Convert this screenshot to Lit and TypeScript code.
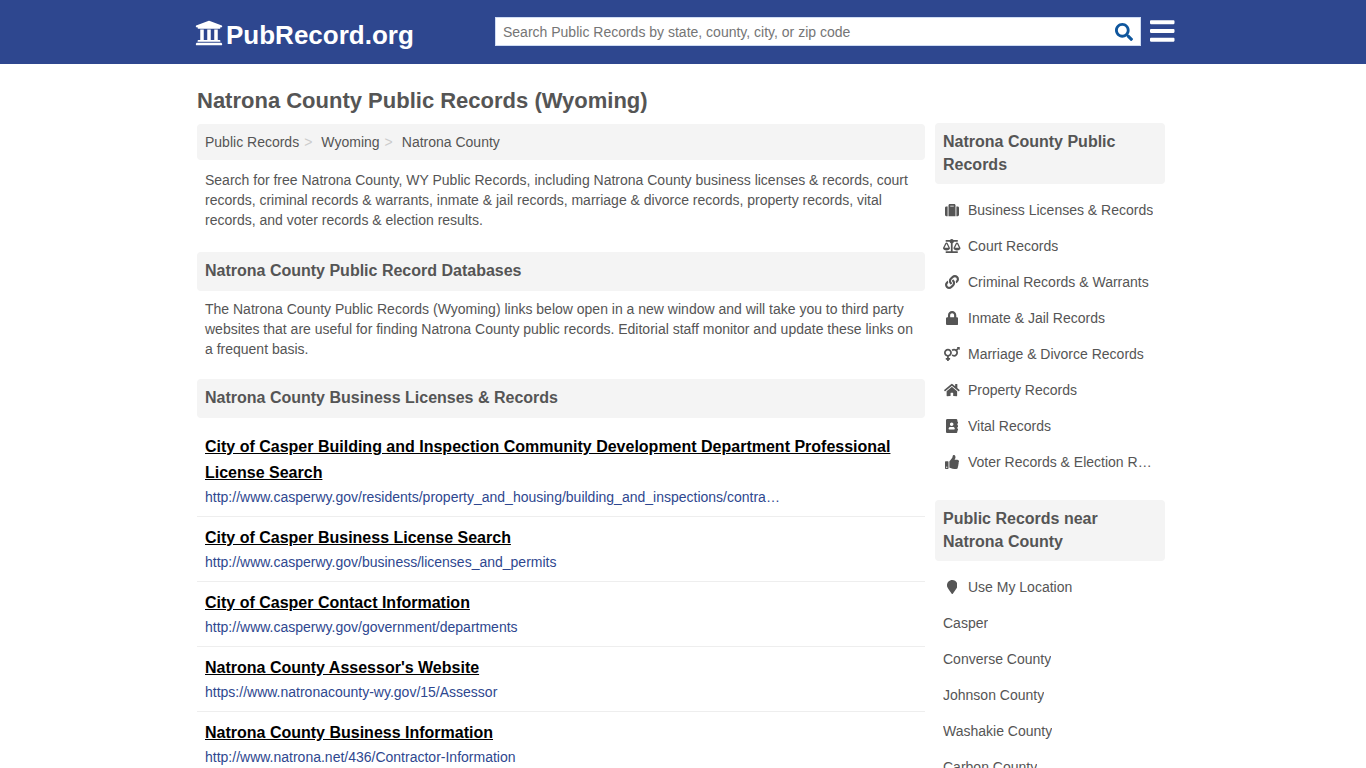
import { LitElement, html, css, svg } from "lit";
import { customElement } from "lit/decorators.js";

interface Icon {
  w: number;
  d: string;
}

const icons: Record<string, Icon> = {
  university: {
    w: 512,
    d: "M496 128v16a8 8 0 0 1-8 8h-24v12c0 6.627-5.373 12-12 12H60c-6.627 0-12-5.373-12-12v-12H24a8 8 0 0 1-8-8v-16a8 8 0 0 1 4.941-7.392l232-88a7.996 7.996 0 0 1 6.118 0l232 88A8 8 0 0 1 496 128zm-24 304H40c-13.255 0-24 10.745-24 24v16a8 8 0 0 0 8 8h464a8 8 0 0 0 8-8v-16c0-13.255-10.745-24-24-24zM96 192v192H60c-6.627 0-12 5.373-12 12v20h416v-20c0-6.627-5.373-12-12-12h-36V192h-64v192h-64V192h-64v192h-64V192H96z",
  },
  search: {
    w: 512,
    d: "M505 442.7L405.3 343c-4.5-4.5-10.6-7-17-7H372c27.6-35.3 44-79.7 44-128C416 93.1 322.9 0 208 0S0 93.1 0 208s93.1 208 208 208c48.3 0 92.7-16.4 128-44v16.3c0 6.4 2.5 12.5 7 17l99.7 99.7c9.4 9.4 24.6 9.4 33.9 0l28.3-28.3c9.4-9.4 9.4-24.6.1-34zM208 336c-70.7 0-128-57.2-128-128 0-70.7 57.2-128 128-128 70.7 0 128 57.2 128 128 0 70.7-57.2 128-128 128z",
  },
  bars: {
    w: 448,
    d: "M16 132h416c8.837 0 16-7.163 16-16V76c0-8.837-7.163-16-16-16H16C7.163 60 0 67.163 0 76v40c0 8.837 7.163 16 16 16zm0 160h416c8.837 0 16-7.163 16-16v-40c0-8.837-7.163-16-16-16H16c-8.837 0-16 7.163-16 16v40c0 8.837 7.163 16 16 16zm0 160h416c8.837 0 16-7.163 16-16v-40c0-8.837-7.163-16-16-16H16c-8.837 0-16 7.163-16 16v40c0 8.837 7.163 16 16 16z",
  },
  suitcase: {
    w: 512,
    d: "M128 480h256V80c0-26.5-21.5-48-48-48H176c-26.5 0-48 21.5-48 48v400zm64-384h128v32H192V96zm320 80v256c0 26.5-21.5 48-48 48h-48V128h48c26.5 0 48 21.5 48 48zM96 480H48c-26.5 0-48-21.5-48-48V176c0-26.5 21.5-48 48-48h48v352z",
  },
  scale: {
    w: 640,
    d: "M256 336h-.02c0-16.18 1.34-8.73-85.05-181.51-17.65-35.29-68.19-35.36-85.87 0C-2.06 328.75.02 320.33.02 336H0c0 44.18 57.31 80 128 80s128-35.82 128-80zM128 176l72 144H56l72-144zm511.98 160c0-16.18 1.34-8.73-85.05-181.51-17.65-35.29-68.19-35.36-85.87 0-87.12 174.26-85.04 165.84-85.04 181.51H384c0 44.18 57.31 80 128 80s128-35.82 128-80h-.02zM440 320l72-144 72 144H440zm88 128H352V153.25c23.51-10.29 41.16-31.48 46.39-57.25H528c8.84 0 16-7.16 16-16V48c0-8.84-7.16-16-16-16H383.64C369.04 12.68 346.09 0 320 0s-49.04 12.68-63.64 32H112c-8.84 0-16 7.16-16 16v32c0 8.84 7.16 16 16 16h129.61c5.23 25.76 22.87 46.96 46.39 57.25V448H112c-8.84 0-16 7.16-16 16v32c0 8.84 7.16 16 16 16h416c8.84 0 16-7.16 16-16v-32c0-8.84-7.16-16-16-16z",
  },
  link: {
    w: 512,
    d: "M326.612 185.391c59.747 59.809 58.927 155.698.36 214.59-.11.12-.24.25-.36.37l-67.2 67.2c-59.27 59.27-155.699 59.262-214.96 0-59.27-59.26-59.27-155.7 0-214.96l37.106-37.106c9.84-9.84 26.786-3.3 27.294 10.606.648 17.722 3.826 35.527 9.69 52.721 1.986 5.822.567 12.262-3.783 16.612l-13.087 13.087c-28.026 28.026-28.905 73.66-1.155 101.96 28.024 28.579 74.086 28.749 102.325.51l67.2-67.19c28.191-28.191 28.073-73.757 0-101.83-3.701-3.694-7.429-6.564-10.341-8.569a16.037 16.037 0 0 1-6.947-12.606c-.396-10.567 3.348-21.456 11.698-29.806l21.054-21.055c5.521-5.521 14.182-6.199 20.584-1.731a152.482 152.482 0 0 1 20.522 17.197zM467.547 44.449c-59.261-59.262-155.69-59.27-214.96 0l-67.2 67.2c-.12.12-.25.25-.36.37-58.566 58.892-59.387 154.781.36 214.59a152.454 152.454 0 0 0 20.521 17.196c6.402 4.468 15.064 3.789 20.584-1.731l21.054-21.055c8.35-8.35 12.094-19.239 11.698-29.806a16.037 16.037 0 0 0-6.947-12.606c-2.912-2.005-6.64-4.875-10.341-8.569-28.073-28.073-28.191-73.639 0-101.83l67.2-67.19c28.239-28.239 74.3-28.069 102.325.51 27.75 28.3 26.872 73.934-1.155 101.96l-13.087 13.087c-4.35 4.35-5.769 10.79-3.783 16.612 5.864 17.194 9.042 34.999 9.69 52.721.509 13.906 17.454 20.446 27.294 10.606l37.106-37.106c59.271-59.259 59.271-155.699.001-214.959z",
  },
  lock: {
    w: 448,
    d: "M400 224h-24v-72C376 68.2 307.8 0 224 0S72 68.2 72 152v72H48c-26.5 0-48 21.5-48 48v192c0 26.5 21.5 48 48 48h352c26.5 0 48-21.5 48-48V272c0-26.5-21.5-48-48-48zm-104 0H152v-72c0-39.7 32.3-72 72-72s72 32.3 72 72v72z",
  },
  venusMars: {
    w: 576,
    d: "M564 0h-79c-10.7 0-16 12.9-8.5 20.5l16.9 16.9-48.7 48.7C422.5 72.1 396.2 64 368 64c-33.7 0-64.6 11.6-89.2 30.9 14 16.7 25 36 32.1 57.1 14.5-14.8 34.7-24 57.1-24 44.1 0 80 35.9 80 80s-35.9 80-80 80c-22.3 0-42.6-9.2-57.1-24-7.1 21.1-18 40.4-32.1 57.1 24.5 19.4 55.5 30.9 89.2 30.9 79.5 0 144-64.5 144-144 0-28.2-8.1-54.5-22.1-76.7l48.7-48.7 16.9 16.9c2.4 2.4 5.4 3.5 8.4 3.5 6.2 0 12.1-4.8 12.1-12V12c0-6.6-5.4-12-12-12zM144 64C64.5 64 0 128.5 0 208c0 68.5 47.9 125.9 112 140.4V400H76c-6.6 0-12 5.4-12 12v40c0 6.6 5.4 12 12 12h36v36c0 6.6 5.4 12 12 12h40c6.6 0 12-5.4 12-12v-36h36c6.6 0 12-5.4 12-12v-40c0-6.6-5.4-12-12-12h-36v-51.6c64.1-14.6 112-71.9 112-140.4 0-79.5-64.5-144-144-144zm0 224c-44.1 0-80-35.9-80-80s35.9-80 80-80 80 35.9 80 80-35.9 80-80 80z",
  },
  home: {
    w: 576,
    d: "M280.37 148.26L96 300.11V464a16 16 0 0 0 16 16l112.06-.29a16 16 0 0 0 15.92-16V368a16 16 0 0 1 16-16h64a16 16 0 0 1 16 16v95.64a16 16 0 0 0 16 16.05L464 480a16 16 0 0 0 16-16V300L295.67 148.26a12.19 12.19 0 0 0-15.3 0zM571.6 251.47L488 182.56V44.05a12 12 0 0 0-12-12h-56a12 12 0 0 0-12 12v72.61L318.47 43a48 48 0 0 0-61 0L4.34 251.47a12 12 0 0 0-1.6 16.9l25.5 31A12 12 0 0 0 45.15 301l235.22-193.74a12.19 12.19 0 0 1 15.3 0L530.9 301a12 12 0 0 0 16.9-1.6l25.5-31a12 12 0 0 0-1.7-16.93z",
  },
  addressBook: {
    w: 448,
    d: "M436 160c6.6 0 12-5.4 12-12v-40c0-6.6-5.4-12-12-12h-20V48c0-26.5-21.5-48-48-48H48C21.5 0 0 21.5 0 48v416c0 26.5 21.5 48 48 48h320c26.5 0 48-21.5 48-48v-48h20c6.6 0 12-5.4 12-12v-40c0-6.6-5.4-12-12-12h-20v-64h20c6.6 0 12-5.4 12-12v-40c0-6.6-5.4-12-12-12h-20v-64h20zm-228-32c35.3 0 64 28.7 64 64s-28.7 64-64 64-64-28.7-64-64 28.7-64 64-64zm112 236.8c0 10.6-10 19.2-22.4 19.2H118.4C106 384 96 375.4 96 364.8v-19.2c0-31.8 30.1-57.6 67.2-57.6h5c12.3 5.1 25.7 8 39.8 8s27.6-2.9 39.8-8h5c37.1 0 67.2 25.8 67.2 57.6v19.2z",
  },
  thumbsUp: {
    w: 512,
    d: "M104 224H24c-13.255 0-24 10.745-24 24v240c0 13.255 10.745 24 24 24h80c13.255 0 24-10.745 24-24V248c0-13.255-10.745-24-24-24zM64 472c-13.255 0-24-10.745-24-24s10.745-24 24-24 24 10.745 24 24-10.745 24-24 24zM384 81.452c0 42.416-25.97 66.208-33.277 94.548h101.723c33.397 0 59.397 27.746 59.553 58.098.084 17.938-7.546 37.249-19.439 49.197l-.11.11c9.836 23.337 8.237 56.037-9.308 79.469 8.681 25.895-.069 57.704-16.382 74.757 4.298 17.598 2.244 32.575-6.148 44.632C440.202 511.587 389.616 512 346.839 512l-2.845-.001c-48.287-.017-87.806-17.598-119.56-31.725-15.957-7.099-36.821-15.887-52.651-16.178-6.54-.12-11.783-5.457-11.783-11.998v-213.77c0-3.2 1.282-6.271 3.558-8.521 39.614-39.144 56.648-80.587 89.117-113.111 14.804-14.832 20.188-37.236 25.393-58.902C282.515 39.293 291.817 0 312 0c24 0 72 8 72 81.452z",
  },
  marker: {
    w: 384,
    d: "M172.268 501.67C26.97 291.031 0 269.413 0 192 0 85.961 85.961 0 192 0s192 85.961 192 192c0 77.413-26.97 99.031-172.268 309.67-9.535 13.774-29.93 13.773-39.464 0z",
  },
};

function icon(name: string, size: number) {
  const { w, d } = icons[name];
  return html`<svg
    width=${(w / 512) * size}
    height=${size}
    viewBox="0 0 ${w} 512"
    aria-hidden="true"
  >
    ${svg`<path fill="currentColor" d=${d}></path>`}
  </svg>`;
}

const categories = [
  ["suitcase", "Business Licenses & Records"],
  ["scale", "Court Records"],
  ["link", "Criminal Records & Warrants"],
  ["lock", "Inmate & Jail Records"],
  ["venusMars", "Marriage & Divorce Records"],
  ["home", "Property Records"],
  ["addressBook", "Vital Records"],
  ["thumbsUp", "Voter Records & Election Results"],
];

const nearby = [
  "Casper",
  "Converse County",
  "Johnson County",
  "Washakie County",
  "Carbon County",
];

const listings = [
  [
    "City of Casper Building and Inspection Community Development Department Professional License Search",
    "http://www.casperwy.gov/residents/property_and_housing/building_and_inspections/contractor_licensing",
  ],
  [
    "City of Casper Business License Search",
    "http://www.casperwy.gov/business/licenses_and_permits",
  ],
  [
    "City of Casper Contact Information",
    "http://www.casperwy.gov/government/departments",
  ],
  [
    "Natrona County Assessor's Website",
    "https://www.natronacounty-wy.gov/15/Assessor",
  ],
  [
    "Natrona County Business Information",
    "http://www.natrona.net/436/Contractor-Information",
  ],
];

@customElement("site-header")
export class SiteHeader extends LitElement {
  static styles = css`
    :host {
      display: block;
      background: #2e478f;
    }
    .bar {
      box-sizing: border-box;
      display: flex;
      align-items: center;
      max-width: 984px;
      height: 64px;
      margin: 0 auto;
      padding: 0 0 2px 4px;
    }
    .logo {
      flex: 0 0 300px;
      display: flex;
      align-items: flex-start;
      gap: 3px;
      padding-top: 8px;
      color: #fff;
      font-size: 26px;
      line-height: 32px;
      font-weight: bold;
      text-decoration: none;
    }
    .search {
      box-sizing: border-box;
      flex: 1;
      min-width: 0;
      display: flex;
      height: 29px;
      margin-right: 9px;
      background: #fff;
      border: 1px solid #cfdcf3;
    }
    .field {
      flex: 1;
      min-width: 0;
      padding: 1px 7px 0;
      border: 0;
      background: none;
      color: #555;
      font: inherit;
      font-size: 14px;
    }
    .field::placeholder {
      color: #757575;
      opacity: 1;
    }
    button {
      display: flex;
      align-items: center;
      padding: 0;
      border: 0;
      background: none;
      cursor: pointer;
    }
    .go {
      padding: 1px 7px 0;
      color: #0f569d;
    }
    .menu {
      flex: 0 0 25px;
      color: #fff;
    }
  `;

  render() {
    return html`
      <header class="bar">
        <a class="logo" href="#">${icon("university", 28)}<span>PubRecord.org</span></a>
        <form class="search" role="search" @submit=${(e: Event) => e.preventDefault()}>
          <input
            class="field"
            type="text"
            aria-label="Search public records"
            placeholder="Search Public Records by state, county, city, or zip code"
          />
          <button class="go" type="submit" aria-label="Search">${icon("search", 18)}</button>
        </form>
        <button class="menu" type="button" aria-label="Menu">${icon("bars", 28)}</button>
      </header>
    `;
  }
}

@customElement("side-nav")
export class SideNav extends LitElement {
  static styles = css`
    :host {
      display: block;
    }
    h3 {
      margin: 0 0 8px;
      padding: 7px 8px 8px;
      border-radius: 4px;
      background: #f4f4f4;
      font-size: 16px;
      line-height: 23px;
    }
    ul {
      margin: 0 0 20px;
      padding: 0;
      list-style: none;
    }
    .item {
      display: flex;
      align-items: center;
      gap: 7px;
      padding: 8px;
      color: inherit;
      line-height: 20px;
      text-decoration: none;
    }
    .glyph {
      flex: 0 0 18px;
      display: flex;
      justify-content: center;
    }
    .label {
      overflow: hidden;
      white-space: nowrap;
      text-overflow: ellipsis;
    }
  `;

  private item(label: string, glyph?: string) {
    return html`<li>
      <a class="item" href="#">
        ${glyph ? html`<span class="glyph">${icon(glyph, 14)}</span>` : null}
        <span class="label">${label}</span>
      </a>
    </li>`;
  }

  render() {
    return html`
      <nav>
        <h3>Natrona County Public Records</h3>
        <ul>
          ${categories.map(([glyph, label]) => this.item(label, glyph))}
        </ul>
        <h3>Public Records near Natrona County</h3>
        <ul>
          ${this.item("Use My Location", "marker")}
          ${nearby.map((label) => this.item(label))}
        </ul>
      </nav>
    `;
  }
}

@customElement("app-root")
export class AppRoot extends LitElement {
  static styles = css`
    :host {
      display: block;
      min-height: 100vh;
      background: #fff;
      color: #555;
      font-family: "Liberation Sans", Arial, sans-serif;
      font-size: 14px;
      line-height: 20px;
    }
    .page {
      box-sizing: border-box;
      display: flex;
      gap: 10px;
      max-width: 980px;
      margin: 0 auto;
      padding: 22px 8px 0 4px;
    }
    main {
      flex: 1;
      min-width: 0;
    }
    .side {
      flex: 0 0 230px;
      min-width: 0;
      padding-top: 37px;
    }
    h1 {
      margin: 0 0 8px;
      font-size: 22px;
      line-height: 30px;
    }
    .crumbs {
      display: flex;
      margin: 0 0 10px;
      padding: 8px;
      border-radius: 4px;
      background: #f4f4f4;
      list-style: none;
    }
    .crumbs a {
      color: inherit;
      text-decoration: none;
    }
    .sep {
      padding: 0 9px 0 5px;
      color: #ccc;
    }
    p {
      margin: 0 0 20px;
      padding: 0 8px;
    }
    .intro {
      margin-bottom: 22px;
    }
    h2 {
      margin: 0 0 8px;
      padding: 7px 8px 9px;
      border-radius: 4px;
      background: #f4f4f4;
      font-size: 16px;
      line-height: 23px;
    }
    .listings {
      margin: 0;
      padding: 0;
      list-style: none;
    }
    .listing {
      padding: 8px;
      border-bottom: 1px solid #eee;
    }
    .title {
      color: #000;
      font-size: 16px;
      line-height: 26px;
      font-weight: bold;
      text-decoration: underline;
    }
    .url {
      max-width: 576px;
      overflow: hidden;
      color: #2e478f;
      line-height: 22px;
      white-space: nowrap;
      text-overflow: ellipsis;
    }
    @media (max-width: 760px) {
      .page {
        flex-direction: column;
      }
      .side {
        flex-basis: auto;
        padding-top: 0;
      }
    }
  `;

  render() {
    return html`
      <site-header></site-header>
      <div class="page">
        <main>
          <h1>Natrona County Public Records (Wyoming)</h1>
          <ol class="crumbs">
            <li><a href="#">Public Records</a><span class="sep">&gt;</span></li>
            <li><a href="#">Wyoming</a><span class="sep">&gt;</span></li>
            <li><a href="#">Natrona County</a></li>
          </ol>
          <p class="intro">
            Search for free Natrona County, WY Public Records, including Natrona
            County business licenses &amp; records, court records, criminal
            records &amp; warrants, inmate &amp; jail records, marriage &amp;
            divorce records, property records, vital records, and voter records
            &amp; election results.
          </p>
          <h2>Natrona County Public Record Databases</h2>
          <p>
            The Natrona County Public Records (Wyoming) links below open in a
            new window and will take you to third party websites that are useful
            for finding Natrona County public records. Editorial staff monitor
            and update these links on a frequent basis.
          </p>
          <h2>Natrona County Business Licenses &amp; Records</h2>
          <ul class="listings">
            ${listings.map(
              ([title, url]) => html`<li class="listing">
                <a class="title" href=${url} target="_blank">${title}</a>
                <div class="url">${url}</div>
              </li>`
            )}
          </ul>
        </main>
        <side-nav class="side"></side-nav>
      </div>
    `;
  }
}
